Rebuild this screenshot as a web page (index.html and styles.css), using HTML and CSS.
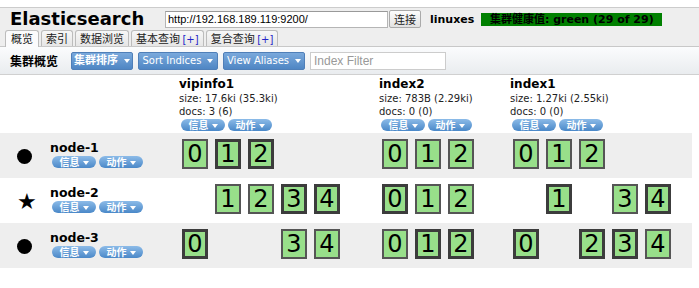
FILE: index.html
```html
<!DOCTYPE html>
<html lang="zh">
<head>
    <meta charset="UTF-8">
    <meta name="viewport" content="width=device-width, initial-scale=1.0">
    <title>Elasticsearch</title>
    <link rel="stylesheet" href="styles.css">
</head>
<body>

    <div class="header">
        <div class="masthead">
            <h1>Elasticsearch</h1>
            <input type="text" class="uri" value="http://192.168.189.119:9200/">
            <button type="button" class="connect">连接</button>
            <span class="cluster-name">linuxes</span>
            <span class="health">集群健康值: green (29 of 29)</span>
        </div>
        <ul class="tabs">
            <li class="tab active">概览</li>
            <li class="tab">索引</li>
            <li class="tab">数据浏览</li>
            <li class="tab">基本查询 <span class="plus">[+]</span></li>
            <li class="tab">复合查询 <span class="plus">[+]</span></li>
        </ul>
    </div>

    <div class="toolbar">
        <span class="toolbar-label">集群概览</span>
        <button type="button" class="btn btn-sort">集群排序<span class="caret"></span></button>
        <button type="button" class="btn btn-indices">Sort Indices<span class="caret"></span></button>
        <button type="button" class="btn btn-aliases">View Aliases<span class="caret"></span></button>
        <input type="text" class="filter" placeholder="Index Filter">
    </div>

    <div class="overview">
        <div class="row head">
            <div class="cell"></div>
            <div class="cell index">
                <div class="index-name">vipinfo1</div>
                <div class="stat">size: 17.6ki (35.3ki)</div>
                <div class="stat">docs: 3 (6)</div>
                <div class="pills"><span class="pill">信息<span class="caret"></span></span><span class="pill">动作<span class="caret"></span></span></div>
            </div>
            <div class="cell index">
                <div class="index-name">index2</div>
                <div class="stat">size: 783B (2.29ki)</div>
                <div class="stat">docs: 0 (0)</div>
                <div class="pills"><span class="pill">信息<span class="caret"></span></span><span class="pill">动作<span class="caret"></span></span></div>
            </div>
            <div class="cell index">
                <div class="index-name">index1</div>
                <div class="stat">size: 1.27ki (2.55ki)</div>
                <div class="stat">docs: 0 (0)</div>
                <div class="pills"><span class="pill">信息<span class="caret"></span></span><span class="pill">动作<span class="caret"></span></span></div>
            </div>
        </div>

        <div class="row node shaded">
            <div class="cell node-info">
                <span class="node-icon"><span class="dot"></span></span>
                <div>
                    <div class="node-name">node-1</div>
                    <div class="pills"><span class="pill">信息<span class="caret"></span></span><span class="pill">动作<span class="caret"></span></span></div>
                </div>
            </div>
            <div class="cell shards">
                <span class="shard">0</span><span class="shard primary">1</span><span class="shard primary">2</span>
            </div>
            <div class="cell shards">
                <span class="shard">0</span><span class="shard">1</span><span class="shard">2</span>
            </div>
            <div class="cell shards">
                <span class="shard">0</span><span class="shard">1</span><span class="shard">2</span>
            </div>
        </div>

        <div class="row node">
            <div class="cell node-info">
                <span class="node-icon star">&#9733;</span>
                <div>
                    <div class="node-name">node-2</div>
                    <div class="pills"><span class="pill">信息<span class="caret"></span></span><span class="pill">动作<span class="caret"></span></span></div>
                </div>
            </div>
            <div class="cell shards">
                <span class="slot"></span><span class="shard">1</span><span class="shard">2</span><span class="shard primary">3</span><span class="shard primary">4</span>
            </div>
            <div class="cell shards">
                <span class="shard primary">0</span><span class="shard">1</span><span class="shard">2</span>
            </div>
            <div class="cell shards">
                <span class="slot"></span><span class="shard primary">1</span><span class="slot"></span><span class="shard">3</span><span class="shard primary">4</span>
            </div>
        </div>

        <div class="row node shaded">
            <div class="cell node-info">
                <span class="node-icon"><span class="dot"></span></span>
                <div>
                    <div class="node-name">node-3</div>
                    <div class="pills"><span class="pill">信息<span class="caret"></span></span><span class="pill">动作<span class="caret"></span></span></div>
                </div>
            </div>
            <div class="cell shards">
                <span class="shard primary">0</span><span class="slot"></span><span class="slot"></span><span class="shard">3</span><span class="shard">4</span>
            </div>
            <div class="cell shards">
                <span class="shard">0</span><span class="shard primary">1</span><span class="shard primary">2</span>
            </div>
            <div class="cell shards">
                <span class="shard primary">0</span><span class="slot"></span><span class="shard primary">2</span><span class="shard primary">3</span><span class="shard">4</span>
            </div>
        </div>
    </div>

</body>
</html>
```

FILE: styles.css
```css
body {
    margin: 0;
    font-family: "DejaVu Sans", Verdana, "Noto Sans CJK SC", sans-serif;
    font-size: 12px;
    color: #000;
    background-color: #fff;
}

/* header band */
.header {
    margin-top: 7px;
    background-color: #eee;
    border-top: 1px solid #ccc;
    border-bottom: 1px solid #c8c8c8;
}
.masthead {
    display: flex;
    align-items: center;
    height: 22px;
}
h1 {
    width: 155px;
    margin: 0 0 0 10px;
    font-size: 18px;
    line-height: 22px;
    font-weight: bold;
}
.uri {
    width: 223px;
    height: 17px;
    box-sizing: border-box;
    padding: 0 2px;
    border: 1px solid #b5b5b5;
    border-top-color: #999;
    font-family: "Liberation Sans", Arial, sans-serif;
    font-size: 11px;
}
.connect {
    width: 32px;
    height: 18px;
    margin-left: 1px;
    padding: 0;
    border: 1px solid #aaa;
    border-radius: 2px;
    background: linear-gradient(#fdfdfd, #e2e2e2);
    font-family: "Noto Sans CJK SC", sans-serif;
    font-size: 11px;
    color: #222;
}
.cluster-name {
    margin-left: 9px;
    font-weight: bold;
    font-size: 11px;
}
.health {
    width: 181px;
    height: 13px;
    margin-left: 7px;
    background-color: #008000;
    font-weight: bold;
    font-size: 11px;
    line-height: 13px;
    text-align: center;
    color: #000;
}

/* tabs */
.tabs {
    display: flex;
    align-items: flex-end;
    gap: 2px;
    height: 16px;
    margin: 0;
    padding: 0 0 0 5px;
    list-style: none;
}
.tab {
    height: 15px;
    padding: 0 4px;
    border: 1px solid #bcbcbc;
    border-bottom: none;
    border-radius: 3px 3px 0 0;
    background: linear-gradient(#f7f7f7, #e6e6e6);
    font-family: "Noto Sans CJK SC", sans-serif;
    font-size: 11px;
    line-height: 15px;
    color: #222;
}
.tab.active {
    height: 16px;
    margin-bottom: -1px;
    padding: 0 5px;
    background: #fbfbfc;
}
.plus {
    font-family: "DejaVu Sans", sans-serif;
    font-size: 10px;
    color: #2424c8;
}

/* toolbar */
.toolbar {
    display: flex;
    align-items: center;
    gap: 5px;
    height: 27px;
    padding-left: 10px;
    background: linear-gradient(#fbfcfd, #e9ecef);
    border-bottom: 1px solid #d0d0d0;
}
.toolbar-label {
    width: 56px;
    font-family: "Noto Sans CJK SC", sans-serif;
    font-weight: bold;
    font-size: 12px;
}
.btn {
    height: 18px;
    padding: 0;
    border: 1px solid #4f7fb8;
    border-radius: 2px;
    background: linear-gradient(#7aa9dc, #4f86c4);
    color: #fff;
    font-family: "DejaVu Sans", "Noto Sans CJK SC", sans-serif;
    font-size: 10px;
    line-height: 16px;
}
.btn-sort {
    width: 62px;
    font-size: 11px;
    font-weight: bold;
}
.btn-indices {
    width: 80px;
}
.btn-aliases {
    width: 82px;
}
.filter {
    width: 136px;
    height: 18px;
    box-sizing: border-box;
    padding: 0 3px;
    border: 1px solid #ccc;
    font-family: "Liberation Sans", Arial, sans-serif;
    font-size: 12px;
}
.filter::placeholder {
    color: #999;
}
.caret {
    display: inline-block;
    vertical-align: middle;
    margin-left: 6px;
    border-left: 3px solid transparent;
    border-right: 3px solid transparent;
    border-top: 4px solid #fff;
}

/* cluster overview grid */
.overview {
    width: 692px;
}
.row {
    display: grid;
    grid-template-columns: 177px 200px 131px 184px;
}
.row.head {
    height: 58px;
}
.row.node {
    height: 45px;
}
.row.shaded {
    background-color: #eee;
}
.index {
    padding: 2px 0 0 2px;
}
.index-name {
    font-weight: bold;
    font-size: 12px;
    line-height: 15px;
}
.stat {
    font-size: 10px;
    line-height: 13px;
    color: #222;
}
.pills {
    display: flex;
    gap: 3px;
    margin-top: 1px;
    padding-left: 2px;
}
.pill {
    display: inline-block;
    width: 44px;
    height: 12px;
    box-sizing: border-box;
    border-radius: 6px;
    background: linear-gradient(#8cbbe8, #4a88c8);
    color: #fff;
    font-family: "Noto Sans CJK SC", sans-serif;
    font-weight: bold;
    font-size: 10px;
    line-height: 12px;
    text-align: center;
}
.pill .caret {
    margin-left: 3px;
}
.node-info {
    display: flex;
    align-items: flex-start;
    padding: 7px 0 0 17px;
}
.node-icon {
    width: 16px;
    margin-top: 9px;
    margin-right: 17px;
    line-height: 16px;
    text-align: center;
}
.node-icon.star {
    margin-top: 7px;
    font-size: 22px;
    line-height: 20px;
}
.dot {
    display: block;
    width: 15px;
    height: 15px;
    border-radius: 50%;
    background-color: #000;
}
.node-name {
    font-weight: bold;
    font-size: 12.5px;
    line-height: 15px;
}
.shards {
    display: flex;
    gap: 7px;
    padding: 6px 0 0 5px;
}
.shard, .slot {
    width: 26px;
    height: 30px;
    box-sizing: border-box;
}
.shard {
    border: 2px solid #555;
    background-color: #98df8a;
    font-size: 24px;
    line-height: 26px;
    text-align: center;
}
.shard.primary {
    border: 3px solid #3c3c3c;
    line-height: 24px;
}
```
